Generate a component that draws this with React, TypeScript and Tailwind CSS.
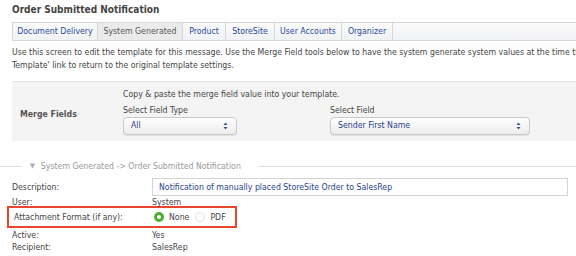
const font = { fontFamily: '"DejaVu Sans Condensed", "DejaVu Sans", sans-serif' };

const tabs = [
  { label: "Document Delivery", w: "w-[86px]" },
  { label: "System Generated", w: "w-[85px]" },
  { label: "Product", w: "w-[43px]" },
  { label: "StoreSite", w: "w-[49px]" },
  { label: "User Accounts", w: "w-[67px]" },
  { label: "Organizer", w: "w-[51px]" },
];

function SelectBox({ label, className }: { label: string; className: string }) {
  return (
    <div
      className={`flex h-[18px] items-center justify-between rounded-[4px] border border-[#c9c9c9] bg-gradient-to-b from-white to-[#ececec] pl-[7px] pr-[8px] text-[8.7px] text-[#2a3f8f] shadow-[0_1px_1px_rgba(0,0,0,0.08)] ${className}`}
    >
      <span>{label}</span>
      <svg width="5" height="8" viewBox="0 0 5 8">
        <path d="M0.5 3 L2.5 0.5 L4.5 3 Z" fill="#3a4f9f" />
        <path d="M0.5 5 L2.5 7.5 L4.5 5 Z" fill="#3a4f9f" />
      </svg>
    </div>
  );
}

export default function App() {
  return (
    <div className="h-[256px] w-[576px] overflow-hidden bg-white text-[8.7px] text-[#444]" style={font}>
      <div className="pl-[12px] pt-[3px] text-[10px] font-bold leading-[14px] text-[#444]">
        Order Submitted Notification
      </div>

      <div className="ml-[12px] mt-[5px] flex h-[19px] border-y border-[#d6d6d6] bg-gradient-to-b from-[#fafafa] to-[#f1f2f4]">
        {tabs.map((t, i) => (
          <div
            key={t.label}
            className={`flex items-center justify-center border-r border-[#d6d6d6] ${t.w} ${
              t.label === "System Generated" ? "bg-[#ebebeb] text-[#555]" : "text-[#2a4a9c]"
            } ${i === 0 ? "border-l" : ""}`}
          >
            {t.label}
          </div>
        ))}
      </div>

      <div className="pl-[12px] pt-[5px] leading-[13px] text-[#444]">
        <div className="whitespace-nowrap">
          Use this screen to edit the template for this message. Use the Merge Field tools below to have the system generate system values at the time the
        </div>
        <div className="whitespace-nowrap">Template' link to return to the original template settings.</div>
      </div>

      <div className="ml-[12px] mt-[9px] flex h-[60px] border-t border-[#e2e2e2] bg-[#f4f4f4]">
        <div className="flex w-[111px] items-center pl-[8px] pt-[6px] font-bold text-[#555]">Merge Fields</div>
        <div className="pt-[6px]">
          <div className="leading-[12px]">Copy &amp; paste the merge field value into your template.</div>
          <div className="flex gap-[93px]">
            <div>
              <div className="mt-[4px] leading-[12px]">Select Field Type</div>
              <SelectBox label="All" className="mt-[1px] w-[114px]" />
            </div>
            <div>
              <div className="mt-[4px] leading-[12px]">Select Field</div>
              <SelectBox label="Sender First Name" className="mt-[1px] w-[200px]" />
            </div>
          </div>
        </div>
      </div>

      <div className="mt-[19px] flex items-center text-[#999]">
        <div className="h-px w-[22px] bg-[#ddd]" />
        <span className="ml-[8px] mr-[6px] text-[7px] text-[#aaa]">▼</span>
        <span>System Generated -&gt; Order Submitted Notification</span>
        <div className="ml-[18px] h-px flex-1 bg-[#ddd]" />
      </div>

      <div className="pl-[12px] pt-[5px] leading-[13px]">
        <div className="flex items-center">
          <div className="w-[140px]">Description:</div>
          <div className="flex h-[18px] w-[416px] items-center border border-[#d4d4d4] pl-[6px] text-[#2a3f8f]">
            Notification of manually placed StoreSite Order to SalesRep
          </div>
        </div>
        <div className="flex h-[10px]">
          <div className="w-[140px]">User:</div>
          <div>System</div>
        </div>
        <div className="-ml-[5px] flex h-[22px] w-[230px] items-center border-2 border-[#e8462f] pl-[5px]">
          <div className="w-[140px]">Attachment Format (if any):</div>
          <div className="flex items-center">
            <span className="h-[10px] w-[10px] rounded-full border-[3px] border-[#4caf33] bg-white" />
            <span className="ml-[5px]">None</span>
            <span className="ml-[6px] h-[10px] w-[10px] rounded-full border border-[#ddd] bg-white" />
            <span className="ml-[5px]">PDF</span>
          </div>
        </div>
        <div className="mt-[1px] flex h-[12px] leading-[12px]">
          <div className="w-[140px]">Active:</div>
          <div>Yes</div>
        </div>
        <div className="flex h-[13px] leading-[13px]">
          <div className="w-[140px]">Recipient:</div>
          <div>SalesRep</div>
        </div>
      </div>
    </div>
  );
}
